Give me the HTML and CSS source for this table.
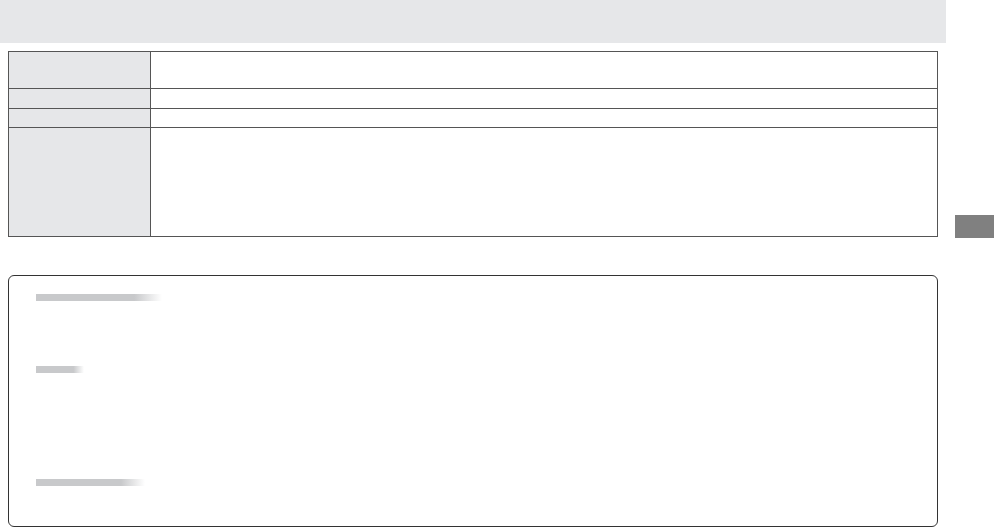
FILE: index.html
```html
<!DOCTYPE html>
<html lang="en">
<head>
  <meta charset="UTF-8" />
  <meta name="viewport" content="width=device-width, initial-scale=1.0"/>
  <title>Manual page</title>
  <link rel="stylesheet" href="styles.css">
</head>
<body>
  <div class="page">
    <div class="main">
      <header class="band"></header>

      <table class="spec">
        <tr class="row-a">
          <th></th>
          <td></td>
        </tr>
        <tr class="row-b">
          <th></th>
          <td></td>
        </tr>
        <tr class="row-c">
          <th></th>
          <td></td>
        </tr>
        <tr class="row-d">
          <th></th>
          <td></td>
        </tr>
      </table>

      <div class="note">
        <div class="section sec-1">
          <div class="bar bar-1"></div>
        </div>
        <div class="section sec-2">
          <div class="bar bar-2"></div>
        </div>
        <div class="section sec-3">
          <div class="bar bar-3"></div>
        </div>
      </div>
    </div>

    <aside class="side">
      <div class="tab"></div>
    </aside>
  </div>
</body>
</html>
```

FILE: styles.css
```css
body {
  font-family: 'Liberation Sans', Arial, sans-serif;
  background-color: #ffffff;
  margin: 0;
}

.page {
  display: flex;
  width: 994px;
  height: 528px;
  overflow: hidden;
}

.main {
  width: 946px;
  flex-shrink: 0;
}

.band {
  height: 43px;
  background-color: #e6e7e9;
}

.spec {
  margin: 8px 0 0 8px;
  width: 930px;
  border-collapse: collapse;
}

.spec th,
.spec td {
  border: 1px solid #555555;
  padding: 0;
}

.spec th {
  width: 141px;
  background-color: #e6e7e9;
}

.row-a { height: 37px; }
.row-b { height: 20px; }
.row-c { height: 19px; }
.row-d { height: 109px; }

.note {
  margin: 38px 0 0 8px;
  width: 930px;
  height: 252px;
  border: 1px solid #333333;
  border-radius: 6px;
  padding: 18px 0 0 27px;
  box-sizing: border-box;
}

.section {
  display: flex;
  flex-direction: column;
}

.sec-1 { height: 72px; }
.sec-2 { height: 113px; }

.bar {
  height: 7px;
  background: linear-gradient(to right, #c8c9cb 0%, #c8c9cb 78%, #ffffff 100%);
}

.bar-1 { width: 126px; }
.bar-2 { width: 48px; }
.bar-3 { width: 109px; }

.side {
  flex: 1;
  display: flex;
  padding-top: 215px;
}

.tab {
  margin-left: auto;
  width: 39px;
  height: 23px;
  background-color: #808080;
}
```
